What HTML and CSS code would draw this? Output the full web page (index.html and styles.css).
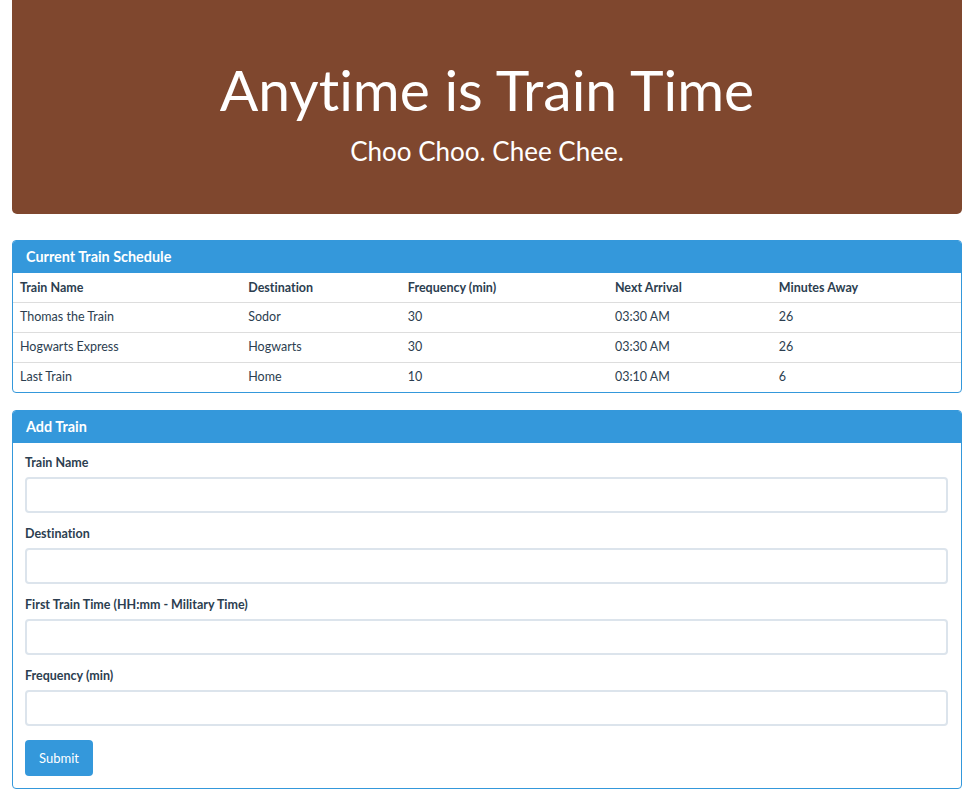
FILE: index.html
```html
<!DOCTYPE html>
<html>
<head>
<meta charset="utf-8">
<link rel="stylesheet" href="styles.css">
</head>
<body>
<div class="container">
  <div class="jumbotron">
    <h1 class="title">Anytime is Train Time</h1>
    <p class="subtitle">Choo Choo. Chee Chee.</p>
  </div>

  <div class="panel">
    <div class="panel-heading">Current Train Schedule</div>
    <table class="schedule">
      <thead>
        <tr><th>Train Name</th><th>Destination</th><th>Frequency (min)</th><th>Next Arrival</th><th>Minutes Away</th></tr>
      </thead>
      <tbody>
        <tr><td>Thomas the Train</td><td>Sodor</td><td>30</td><td>03:30 AM</td><td>26</td></tr>
        <tr><td>Hogwarts Express</td><td>Hogwarts</td><td>30</td><td>03:30 AM</td><td>26</td></tr>
        <tr><td>Last Train</td><td>Home</td><td>10</td><td>03:10 AM</td><td>6</td></tr>
      </tbody>
    </table>
  </div>

  <div class="panel">
    <div class="panel-heading">Add Train</div>
    <form class="panel-body">
      <div class="form-group">
        <label class="label">Train Name</label>
        <input class="input" type="text">
      </div>
      <div class="form-group">
        <label class="label">Destination</label>
        <input class="input" type="text">
      </div>
      <div class="form-group">
        <label class="label">First Train Time (HH:mm - Military Time)</label>
        <input class="input" type="text">
      </div>
      <div class="form-group">
        <label class="label">Frequency (min)</label>
        <input class="input" type="text">
      </div>
      <button class="btn" type="button">Submit</button>
    </form>
  </div>
</div>
</body>
</html>
```
FILE: styles.css
```css
* { box-sizing: border-box; }
body {
  margin: 0;
  font-family: Lato, "Open Sans", sans-serif;
  font-size: 13px;
  color: #2c3e50;
  background: #fff;
  font-variant-ligatures: none;
}
.container {
  padding: 0 11px 0 12px;
}
.jumbotron {
  background: #7f472e;
  border-radius: 0 0 5px 5px;
  height: 214px;
  margin-bottom: 26px;
  color: #fff;
  text-align: center;
  display: flex;
  flex-direction: column;
  align-items: center;
  padding-top: 58px;
}
.title {
  margin: 0;
  font-size: 57px;
  font-weight: 400;
  line-height: 1.1;
}
.subtitle {
  margin: 15px 0 0;
  font-size: 26px;
  line-height: 1.2;
}
.panel {
  border: 1px solid #3498db;
  border-radius: 4px;
  margin-bottom: 17px;
  overflow: hidden;
}
.panel-heading {
  background: #3498db;
  color: #fff;
  font-weight: 700;
  font-size: 14.4px;
  height: 32px;
  line-height: 32px;
  padding: 0 13px;
}
.schedule {
  width: 100%;
  border-collapse: collapse;
}
.schedule th, .schedule td {
  text-align: left;
  padding: 0 7px;
  height: 30px;
  font-size: 12.5px;
}
.schedule th { font-weight: 700; height: 29px; }
.schedule tbody td { border-top: 1px solid #ddd; padding-bottom: 1px; }
.panel-body {
  padding: 11px 13px 12px 12px;
  display: flex;
  flex-direction: column;
}
.form-group {
  display: flex;
  flex-direction: column;
  margin-bottom: 12px;
}
.label {
  font-weight: 700;
  font-size: 12.5px;
  margin-bottom: 5px;
  line-height: 18px;
}
.input {
  height: 36px;
  border: 2px solid #dce4ec;
  border-radius: 4px;
  background: #fff;
  font-family: inherit;
}
.form-group:last-of-type { margin-bottom: 14px; }
.btn {
  align-self: flex-start;
  background: #3498db;
  color: #fff;
  border: 0;
  border-radius: 4px;
  height: 36px;
  padding: 0 14px;
  font-family: inherit;
  font-size: 13px;
}
```
